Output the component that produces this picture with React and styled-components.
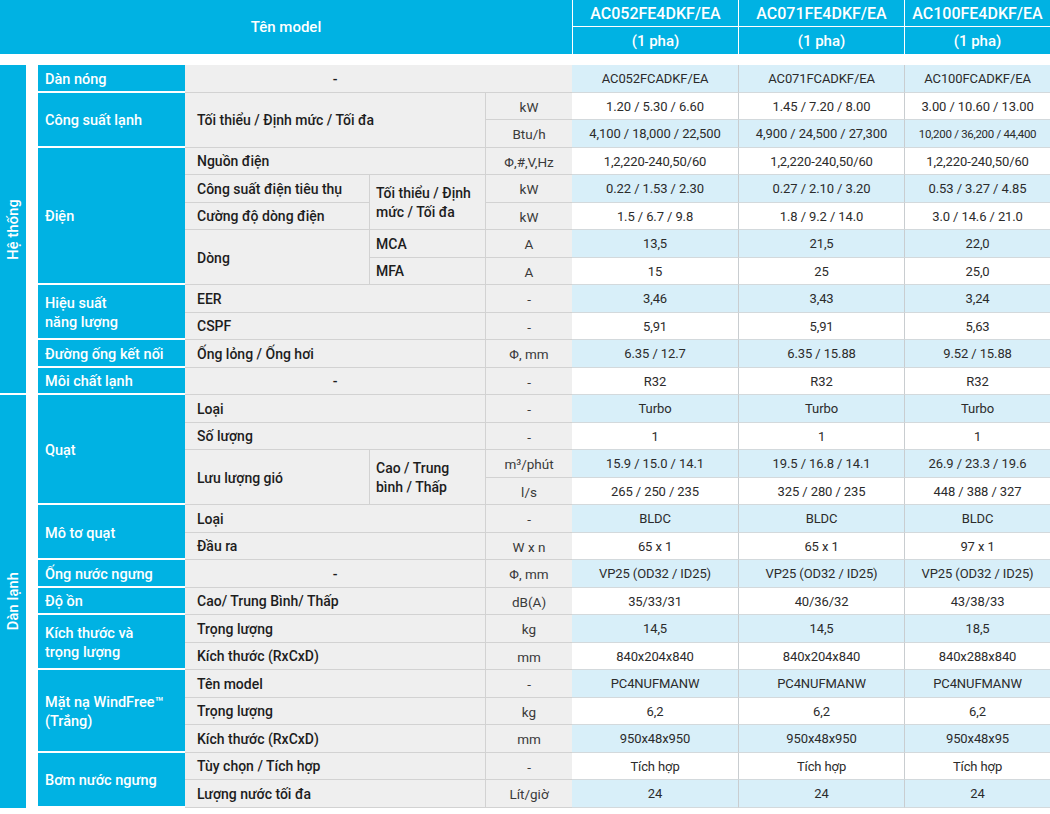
import React from 'react';
import styled, { createGlobalStyle } from 'styled-components';

const GlobalStyle = createGlobalStyle`
  html, body {
    margin: 0;
    padding: 0;
    background: #fff;
  }
  body {
    font-family: Roboto, 'Noto Sans', 'Liberation Sans', sans-serif;
  }
`;

const BLUE = '#00b2e3';
const GREY = '#efefef';
const GREY_LINE = '#d2d2d2';
const DATA_ALT = '#d8eff9';
const DATA_LINE = '#d3d9dc';

const Page = styled.div`
  width: 1050px;
`;

const HeaderBar = styled.div`
  display: grid;
  grid-template-columns: 572px 166px 166px 1fr;
  grid-template-rows: 27px 27px;
  background: ${BLUE};
  color: #fff;
  font-size: 15px;
  font-weight: 500;
`;

const HeaderTitle = styled.div`
  grid-row: 1 / span 2;
  display: flex;
  align-items: center;
  justify-content: center;
`;

const HeaderModel = styled.div`
  display: flex;
  align-items: center;
  justify-content: center;
  border-left: 1px solid #fff;
  border-bottom: ${(p) => (p.$top ? '1px solid #fff' : 'none')};
  font-size: ${(p) => (p.$top ? '16px' : '15px')};
  box-sizing: border-box;
`;

const Table = styled.table`
  width: 1050px;
  margin-top: 11px;
  table-layout: fixed;
  border-collapse: separate;
  border-spacing: 0;
  font-size: 14px;

  tr {
    height: 27.5px;
  }
  td {
    padding: 0;
    box-sizing: border-box;
    vertical-align: middle;
  }
`;

const GroupCell = styled.td`
  background: ${BLUE};
  color: #fff;
  text-align: center;
  font-weight: 500;
  border-bottom: ${(p) => (p.$last ? 'none' : '2px solid #fff')};
`;

const VerticalText = styled.span`
  display: inline-block;
  writing-mode: vertical-rl;
  transform: rotate(180deg);
  font-size: 14.5px;
  letter-spacing: 0.2px;
  margin-top: 3px;
`;

const Spacer = styled.td`
  background: #fff;
`;

const CategoryCell = styled.td`
  background: ${BLUE};
  color: #fff;
  font-weight: 500;
  font-size: 14.5px;
  line-height: 19px;
  padding-left: 7px !important;
  padding-top: 3px !important;
  border-bottom: 2px solid #fff;
`;

const LabelCell = styled.td`
  background: ${GREY};
  color: #1d1d1d;
  font-weight: 500;
  line-height: 19px;
  text-align: ${(p) => (p.$center ? 'center' : 'left')};
  padding-left: ${(p) => (p.$center ? '0' : p.$sub ? '6px' : '12px')} !important;
  padding-top: 2px !important;
  border-bottom: 1px solid ${GREY_LINE};
  border-left: ${(p) => (p.$sub ? `1px solid ${GREY_LINE}` : 'none')};
`;

const UnitCell = styled.td`
  background: ${GREY};
  color: #3a3a3a;
  font-size: 13.5px;
  text-align: center;
  padding-top: 2px !important;
  border-bottom: 1px solid ${GREY_LINE};
  border-left: ${(p) => (p.$bare ? 'none' : `1px solid ${GREY_LINE}`)};
`;

const DataCell = styled.td`
  background: ${(p) => (p.$alt ? DATA_ALT : '#fff')};
  color: #2b2b2b;
  font-size: ${(p) => (p.$small ? '11.5px' : '13px')};
  letter-spacing: ${(p) => (p.$small ? '-0.3px' : '-0.1px')};
  text-align: center;
  white-space: nowrap;
  padding-top: 1px !important;
  border-bottom: 1px solid ${DATA_LINE};
  border-left: ${(p) => (p.$first ? 'none' : '1px solid #c9cdd0')};
`;

const values = [
  ['AC052FCADKF/EA', 'AC071FCADKF/EA', 'AC100FCADKF/EA'],
  ['1.20 / 5.30 / 6.60', '1.45 / 7.20 / 8.00', '3.00 / 10.60 / 13.00'],
  ['4,100 / 18,000 / 22,500', '4,900 / 24,500 / 27,300', '10,200 / 36,200 / 44,400'],
  ['1,2,220-240,50/60', '1,2,220-240,50/60', '1,2,220-240,50/60'],
  ['0.22 / 1.53 / 2.30', '0.27 / 2.10 / 3.20', '0.53 / 3.27 / 4.85'],
  ['1.5 / 6.7 / 9.8', '1.8 / 9.2 / 14.0', '3.0 / 14.6 / 21.0'],
  ['13,5', '21,5', '22,0'],
  ['15', '25', '25,0'],
  ['3,46', '3,43', '3,24'],
  ['5,91', '5,91', '5,63'],
  ['6.35 / 12.7', '6.35 / 15.88', '9.52 / 15.88'],
  ['R32', 'R32', 'R32'],
  ['Turbo', 'Turbo', 'Turbo'],
  ['1', '1', '1'],
  ['15.9 / 15.0 / 14.1', '19.5 / 16.8 / 14.1', '26.9 / 23.3 / 19.6'],
  ['265 / 250 / 235', '325 / 280 / 235', '448 / 388 / 327'],
  ['BLDC', 'BLDC', 'BLDC'],
  ['65 x 1', '65 x 1', '97 x 1'],
  ['VP25 (OD32 / ID25)', 'VP25 (OD32 / ID25)', 'VP25 (OD32 / ID25)'],
  ['35/33/31', '40/36/32', '43/38/33'],
  ['14,5', '14,5', '18,5'],
  ['840x204x840', '840x204x840', '840x288x840'],
  ['PC4NUFMANW', 'PC4NUFMANW', 'PC4NUFMANW'],
  ['6,2', '6,2', '6,2'],
  ['950x48x950', '950x48x950', '950x48x95'],
  ['Tích hợp', 'Tích hợp', 'Tích hợp'],
  ['24', '24', '24'],
];

const models = ['AC052FE4DKF/EA', 'AC071FE4DKF/EA', 'AC100FE4DKF/EA'];

function Data({ row }) {
  return values[row].map((v, i) => (
    <DataCell
      key={i}
      $alt={row % 2 === 0}
      $first={i === 0}
      $small={row === 2 && i === 2}
    >
      {v}
    </DataCell>
  ));
}

export default function App() {
  return (
    <Page>
      <GlobalStyle />
      <HeaderBar>
        <HeaderTitle>Tên model</HeaderTitle>
        {models.map((m) => (
          <HeaderModel key={m} $top>
            {m}
          </HeaderModel>
        ))}
        {models.map((m) => (
          <HeaderModel key={m + 'p'}>(1 pha)</HeaderModel>
        ))}
      </HeaderBar>

      <Table>
        <colgroup>
          <col style={{ width: 26 }} />
          <col style={{ width: 12 }} />
          <col style={{ width: 147 }} />
          <col style={{ width: 184 }} />
          <col style={{ width: 116 }} />
          <col style={{ width: 87 }} />
          <col style={{ width: 166 }} />
          <col style={{ width: 166 }} />
          <col style={{ width: 146 }} />
        </colgroup>
        <tbody>
          <tr>
            <GroupCell rowSpan={12}>
              <VerticalText>Hệ thống</VerticalText>
            </GroupCell>
            <Spacer rowSpan={27} />
            <CategoryCell>Dàn nóng</CategoryCell>
            <LabelCell colSpan={2} $center>-</LabelCell>
            <UnitCell $bare />
            <Data row={0} />
          </tr>
          <tr>
            <CategoryCell rowSpan={2}>Công suất lạnh</CategoryCell>
            <LabelCell colSpan={2} rowSpan={2}>Tối thiểu / Định mức / Tối đa</LabelCell>
            <UnitCell>kW</UnitCell>
            <Data row={1} />
          </tr>
          <tr>
            <UnitCell>Btu/h</UnitCell>
            <Data row={2} />
          </tr>
          <tr>
            <CategoryCell rowSpan={5}>Điện</CategoryCell>
            <LabelCell colSpan={2}>Nguồn điện</LabelCell>
            <UnitCell>Φ,#,V,Hz</UnitCell>
            <Data row={3} />
          </tr>
          <tr>
            <LabelCell>Công suất điện tiêu thụ</LabelCell>
            <LabelCell rowSpan={2} $sub>
              Tối thiểu / Định
              <br />
              mức / Tối đa
            </LabelCell>
            <UnitCell>kW</UnitCell>
            <Data row={4} />
          </tr>
          <tr>
            <LabelCell>Cường độ dòng điện</LabelCell>
            <UnitCell>kW</UnitCell>
            <Data row={5} />
          </tr>
          <tr>
            <LabelCell rowSpan={2}>Dòng</LabelCell>
            <LabelCell $sub>MCA</LabelCell>
            <UnitCell>A</UnitCell>
            <Data row={6} />
          </tr>
          <tr>
            <LabelCell $sub>MFA</LabelCell>
            <UnitCell>A</UnitCell>
            <Data row={7} />
          </tr>
          <tr>
            <CategoryCell rowSpan={2}>
              Hiệu suất
              <br />
              năng lượng
            </CategoryCell>
            <LabelCell colSpan={2}>EER</LabelCell>
            <UnitCell>-</UnitCell>
            <Data row={8} />
          </tr>
          <tr>
            <LabelCell colSpan={2}>CSPF</LabelCell>
            <UnitCell>-</UnitCell>
            <Data row={9} />
          </tr>
          <tr>
            <CategoryCell>Đường ống kết nối</CategoryCell>
            <LabelCell colSpan={2}>Ống lỏng / Ống hơi</LabelCell>
            <UnitCell>Φ, mm</UnitCell>
            <Data row={10} />
          </tr>
          <tr>
            <CategoryCell>Môi chất lạnh</CategoryCell>
            <LabelCell colSpan={2} $center>-</LabelCell>
            <UnitCell>-</UnitCell>
            <Data row={11} />
          </tr>

          <tr>
            <GroupCell rowSpan={15} $last>
              <VerticalText>Dàn lạnh</VerticalText>
            </GroupCell>
            <CategoryCell rowSpan={4}>Quạt</CategoryCell>
            <LabelCell colSpan={2}>Loại</LabelCell>
            <UnitCell>-</UnitCell>
            <Data row={12} />
          </tr>
          <tr>
            <LabelCell colSpan={2}>Số lượng</LabelCell>
            <UnitCell>-</UnitCell>
            <Data row={13} />
          </tr>
          <tr>
            <LabelCell rowSpan={2}>Lưu lượng gió</LabelCell>
            <LabelCell rowSpan={2} $sub>
              Cao / Trung
              <br />
              bình / Thấp
            </LabelCell>
            <UnitCell>m³/phút</UnitCell>
            <Data row={14} />
          </tr>
          <tr>
            <UnitCell>l/s</UnitCell>
            <Data row={15} />
          </tr>
          <tr>
            <CategoryCell rowSpan={2}>Mô tơ quạt</CategoryCell>
            <LabelCell colSpan={2}>Loại</LabelCell>
            <UnitCell>-</UnitCell>
            <Data row={16} />
          </tr>
          <tr>
            <LabelCell colSpan={2}>Đầu ra</LabelCell>
            <UnitCell>W x n</UnitCell>
            <Data row={17} />
          </tr>
          <tr>
            <CategoryCell>Ống nước ngưng</CategoryCell>
            <LabelCell colSpan={2} $center>-</LabelCell>
            <UnitCell>Φ, mm</UnitCell>
            <Data row={18} />
          </tr>
          <tr>
            <CategoryCell>Độ ồn</CategoryCell>
            <LabelCell colSpan={2}>Cao/ Trung Bình/ Thấp</LabelCell>
            <UnitCell>dB(A)</UnitCell>
            <Data row={19} />
          </tr>
          <tr>
            <CategoryCell rowSpan={2}>
              Kích thước và
              <br />
              trọng lượng
            </CategoryCell>
            <LabelCell colSpan={2}>Trọng lượng</LabelCell>
            <UnitCell>kg</UnitCell>
            <Data row={20} />
          </tr>
          <tr>
            <LabelCell colSpan={2}>Kích thước (RxCxD)</LabelCell>
            <UnitCell>mm</UnitCell>
            <Data row={21} />
          </tr>
          <tr>
            <CategoryCell rowSpan={3}>
              Mặt nạ WindFree™
              <br />
              (Trắng)
            </CategoryCell>
            <LabelCell colSpan={2}>Tên model</LabelCell>
            <UnitCell>-</UnitCell>
            <Data row={22} />
          </tr>
          <tr>
            <LabelCell colSpan={2}>Trọng lượng</LabelCell>
            <UnitCell>kg</UnitCell>
            <Data row={23} />
          </tr>
          <tr>
            <LabelCell colSpan={2}>Kích thước (RxCxD)</LabelCell>
            <UnitCell>mm</UnitCell>
            <Data row={24} />
          </tr>
          <tr>
            <CategoryCell rowSpan={2}>Bơm nước ngưng</CategoryCell>
            <LabelCell colSpan={2}>Tùy chọn / Tích hợp</LabelCell>
            <UnitCell>-</UnitCell>
            <Data row={25} />
          </tr>
          <tr>
            <LabelCell colSpan={2}>Lượng nước tối đa</LabelCell>
            <UnitCell>Lít/giờ</UnitCell>
            <Data row={26} />
          </tr>
        </tbody>
      </Table>
    </Page>
  );
}
